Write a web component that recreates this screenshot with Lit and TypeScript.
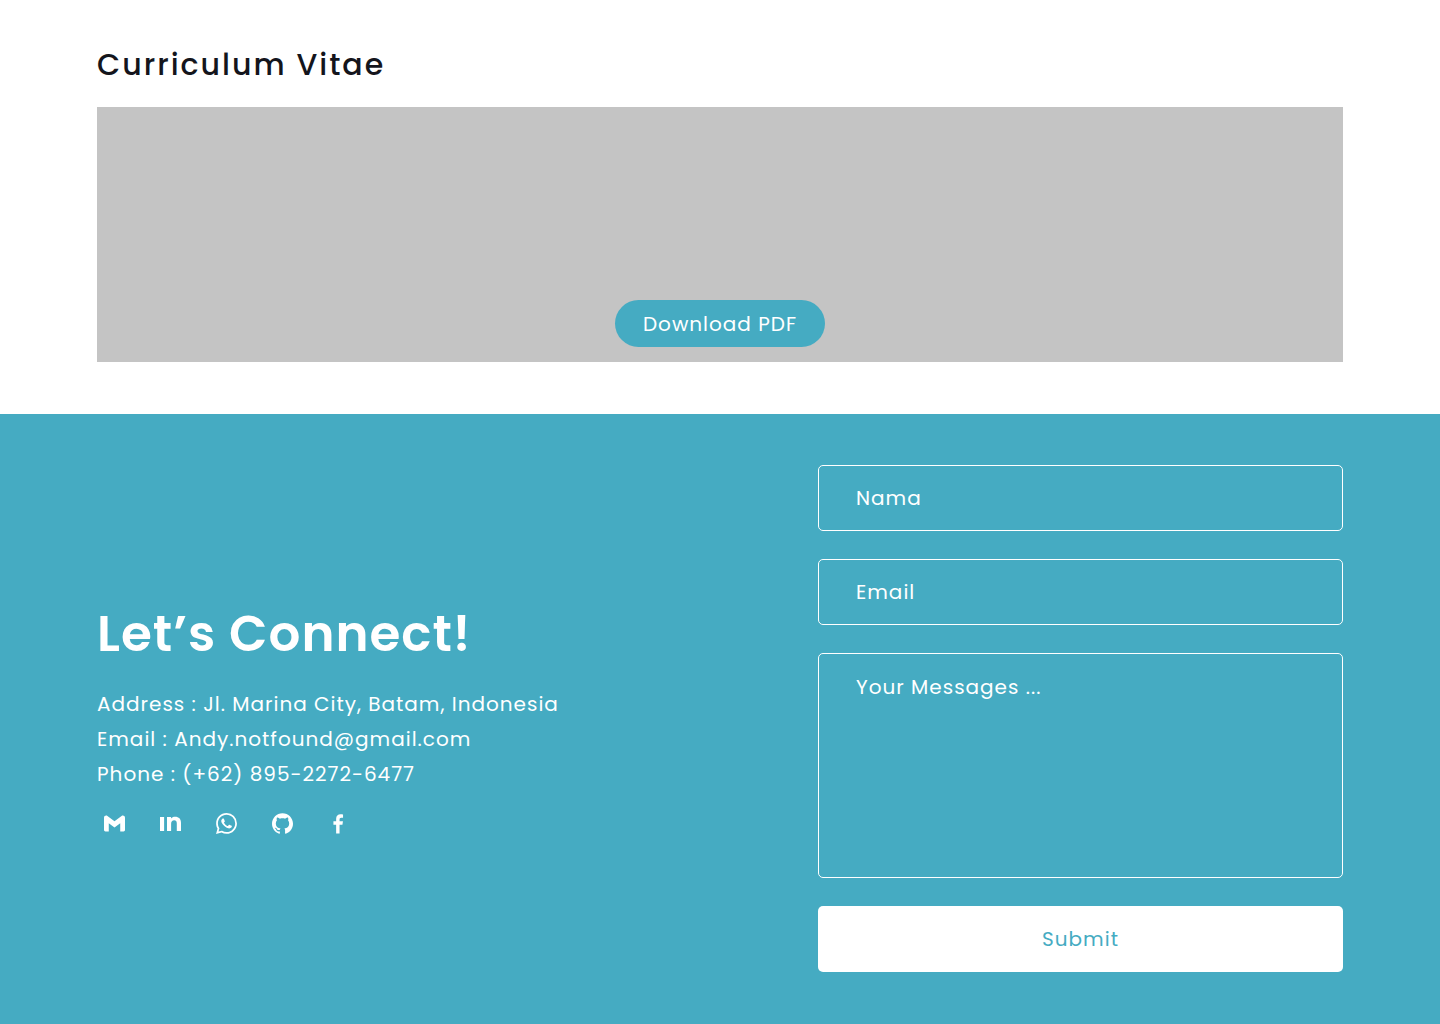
import { LitElement, html, css, svg } from "lit";
import { customElement } from "lit/decorators.js";

interface SocialLink {
  label: string;
  href: string;
  path: string;
}

const socials: SocialLink[] = [
  {
    label: "Gmail",
    href: "mailto:Andy.notfound@gmail.com",
    path: "M24 5.457v13.909c0 .904-.732 1.636-1.636 1.636h-3.819V11.73L12 16.64l-6.545-4.91v9.273H1.636A1.636 1.636 0 0 1 0 19.366V5.457c0-2.023 2.309-3.178 3.927-1.964L5.455 4.64 12 9.548l6.545-4.91 1.528-1.145C21.69 2.28 24 3.434 24 5.457z",
  },
  {
    label: "LinkedIn",
    href: "#linkedin",
    path: "M0 4.500h4.700v16.200H0z M8 4.500h4.600v1.700c1-1.300 2.600-2 4.600-2 4.400 0 6.800 2.600 6.800 7v9.500h-4.800v-8.600c0-2.400-1-3.700-3-3.700-2.200 0-3.500 1.400-3.500 3.900v8.400H8z",
  },
  {
    label: "WhatsApp",
    href: "#whatsapp",
    path: "M17.472 14.382c-.297-.149-1.758-.867-2.03-.967-.273-.099-.471-.148-.67.15-.197.297-.767.966-.94 1.164-.173.199-.347.223-.644.075-.297-.15-1.255-.463-2.39-1.475-.883-.788-1.48-1.761-1.653-2.059-.173-.297-.018-.458.13-.606.134-.133.298-.347.446-.52.149-.174.198-.298.298-.497.099-.198.05-.371-.025-.52-.075-.149-.669-1.612-.916-2.207-.242-.579-.487-.5-.669-.51-.173-.008-.371-.01-.57-.01-.198 0-.52.074-.792.372-.272.297-1.04 1.016-1.04 2.479 0 1.462 1.065 2.875 1.213 3.074.149.198 2.096 3.2 5.077 4.487.709.306 1.262.489 1.694.625.712.227 1.36.195 1.871.118.571-.085 1.758-.719 2.006-1.413.248-.694.248-1.289.173-1.413-.074-.124-.272-.198-.57-.347m-5.421 7.403h-.004a9.87 9.87 0 01-5.031-1.378l-.361-.214-3.741.982.998-3.648-.235-.374a9.86 9.86 0 01-1.51-5.26c.001-5.45 4.436-9.884 9.888-9.884 2.64 0 5.122 1.03 6.988 2.898a9.825 9.825 0 012.893 6.994c-.003 5.45-4.437 9.884-9.885 9.884m8.413-18.297A11.815 11.815 0 0012.05 0C5.495 0 .16 5.335.157 11.892c0 2.096.547 4.142 1.588 5.945L.057 24l6.305-1.654a11.882 11.882 0 005.683 1.448h.005c6.554 0 11.89-5.335 11.893-11.893a11.821 11.821 0 00-3.48-8.413z",
  },
  {
    label: "GitHub",
    href: "#github",
    path: "M12 .297c-6.63 0-12 5.373-12 12 0 5.303 3.438 9.8 8.205 11.385.6.113.82-.258.82-.577 0-.285-.01-1.04-.015-2.04-3.338.724-4.042-1.61-4.042-1.61C4.422 18.07 3.633 17.7 3.633 17.7c-1.087-.744.084-.729.084-.729 1.205.084 1.838 1.236 1.838 1.236 1.07 1.835 2.809 1.305 3.495.998.108-.776.417-1.305.76-1.605-2.665-.3-5.466-1.332-5.466-5.93 0-1.31.465-2.38 1.235-3.22-.135-.303-.54-1.523.105-3.176 0 0 1.005-.322 3.3 1.23.96-.267 1.98-.399 3-.405 1.02.006 2.04.138 3 .405 2.28-1.552 3.285-1.23 3.285-1.23.645 1.653.24 2.873.12 3.176.765.84 1.23 1.91 1.23 3.22 0 4.61-2.805 5.625-5.475 5.92.42.36.81 1.096.81 2.22 0 1.606-.015 2.896-.015 3.286 0 .315.21.69.825.57C20.565 22.092 24 17.592 24 12.297c0-6.627-5.373-12-12-12",
  },
  {
    label: "Facebook",
    href: "#facebook",
    path: "M9.300 23.500V13.300H6.200V9.400h3.100V6.500c0-3.300 2-5.100 5-5.100 1.300 0 2.600.2 2.900.3v3.600h-2c-1.500 0-2 .8-2 2v2.100h3.900l-.6 3.900h-3.300v10.200z",
  },
];

@customElement("app-root")
export class AppRoot extends LitElement {
  static styles = css`
    :host {
      --teal: #45abc2;
      --ink: #14151c;
      display: block;
      min-height: 100vh;
      background: #fff;
      color: var(--ink);
      font-family: Poppins, Inter, "Open Sans", sans-serif;
      font-size: 20px;
      line-height: 35px;
      letter-spacing: 1px;
    }
    *,
    *::before,
    *::after {
      box-sizing: border-box;
    }
    h1,
    h2,
    p {
      margin: 0;
    }
    .page {
      display: flex;
      flex-direction: column;
      min-height: 100vh;
    }
    .cv {
      display: grid;
      gap: 20px;
      padding: 43px 97px 52px;
    }
    .cv-title {
      font-size: 30px;
      line-height: 44px;
      font-weight: 500;
      letter-spacing: 2px;
    }
    .preview {
      display: flex;
      align-items: flex-end;
      justify-content: center;
      min-height: 255px;
      padding: 15px;
      background: #c4c4c4;
    }
    .button {
      border: 0;
      font: inherit;
      letter-spacing: inherit;
      cursor: pointer;
    }
    .download {
      padding: 7px 28px 5px;
      border-radius: 24px;
      background: var(--teal);
      color: #fff;
    }
    .connect {
      flex: 1;
      display: grid;
      grid-template-columns: 721fr 525fr;
      align-items: center;
      padding: 51px 97px 52px;
      background: var(--teal);
      color: #fff;
    }
    .contact {
      display: flex;
      flex-direction: column;
    }
    .contact-title {
      font-size: 50px;
      line-height: 75px;
      font-weight: 600;
    }
    .details {
      padding: 16px 0 14px;
    }
    .mail {
      color: inherit;
      text-decoration: none;
    }
    .socials {
      display: flex;
      gap: 21px;
      margin: 0;
      padding: 0;
      list-style: none;
    }
    .social {
      display: grid;
      place-items: center;
      width: 35px;
      height: 35px;
      color: inherit;
    }
    .icon {
      width: 21px;
      height: 21px;
      fill: currentColor;
    }
    .form {
      display: grid;
      gap: 28px;
    }
    /* The label shares the control's grid cell and hides once there is a value. */
    .field {
      display: grid;
    }
    .label,
    .control {
      grid-area: 1 / 1;
    }
    .label {
      z-index: 1;
      align-self: start;
      padding: 16px 38px 15px;
      pointer-events: none;
    }
    .message-label {
      padding-top: 17px;
    }
    .control {
      width: 100%;
      min-width: 0;
      margin: 0;
      padding: 15px 37px;
      border: 1px solid #fff;
      border-radius: 5px;
      outline-offset: 2px;
      background: transparent;
      color: #fff;
      font: inherit;
      letter-spacing: inherit;
    }
    .control:not(:placeholder-shown) + .label {
      visibility: hidden;
    }
    .input {
      height: 66px;
    }
    .message {
      display: block;
      height: 225px;
      resize: none;
    }
    .submit {
      padding: 16px 0 15px;
      border-radius: 5px;
      background: #fff;
      color: var(--teal);
    }
    @media (max-width: 900px) {
      .cv,
      .connect {
        padding-inline: 24px;
      }
      .connect {
        grid-template-columns: 1fr;
        gap: 40px;
      }
    }
  `;

  private renderIcon(path: string) {
    return html`<svg class="icon" viewBox="0 0 24 24" aria-hidden="true">
      ${svg`<path d=${path}></path>`}
    </svg>`;
  }

  render() {
    return html`
      <main class="page">
        <section class="cv">
          <h1 class="cv-title">Curriculum Vitae</h1>
          <div class="preview">
            <button class="button download" type="button">Download PDF</button>
          </div>
        </section>
        <section class="connect">
          <div class="contact">
            <h2 class="contact-title">Let’s Connect!</h2>
            <div class="details">
              <p>Address : Jl. Marina City, Batam, Indonesia</p>
              <p>
                Email :
                <a class="mail" href="mailto:Andy.notfound@gmail.com">Andy.notfound@gmail.com</a>
              </p>
              <p>Phone : (+62) 895-2272-6477</p>
            </div>
            <ul class="socials">
              ${socials.map(
                (s) => html`<li>
                  <a class="social" href=${s.href} aria-label=${s.label}>${this.renderIcon(s.path)}</a>
                </li>`,
              )}
            </ul>
          </div>
          <form class="form" @submit=${(e: Event) => e.preventDefault()}>
            <div class="field">
              <input class="control input" id="name" type="text" placeholder=" " />
              <label class="label" for="name">Nama</label>
            </div>
            <div class="field">
              <input class="control input" id="email" type="email" placeholder=" " />
              <label class="label" for="email">Email</label>
            </div>
            <div class="field">
              <textarea class="control message" id="message" placeholder=" "></textarea>
              <label class="label message-label" for="message">Your Messages ...</label>
            </div>
            <button class="button submit" type="submit">Submit</button>
          </form>
        </section>
      </main>
    `;
  }
}
